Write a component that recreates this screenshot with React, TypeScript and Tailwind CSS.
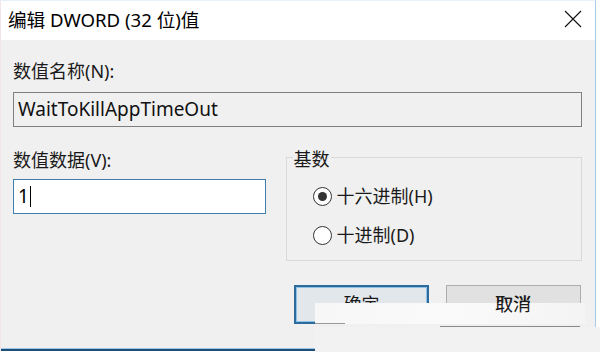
export default function App() {
  return (
    <div className="relative w-[600px] h-[352px] bg-white font-['Noto_Sans','Noto_Sans_CJK_SC',sans-serif] text-black overflow-hidden">
      <div className="w-[596px] h-[351px] flex flex-col border-r border-[#a9cbe8] border-l border-l-[#f1e6e6] border-t border-t-[#e4f3fa]">
        {/* title bar */}
        <div className="h-[39px] bg-white flex items-center justify-between pl-[7px] pr-[13px]">
          <span className="text-[18.6px] leading-[24px] mt-[-1px]">编辑 DWORD (32 位)值</span>
          <svg width="18" height="18" viewBox="0 0 18 18" className="mt-[-3px]">
            <path d="M1 1 L17 17 M17 1 L1 17" stroke="#111" strokeWidth="1.1" fill="none" />
          </svg>
        </div>
        {/* body */}
        <div className="flex-1 bg-[#f0f0f0] pl-[12px] pr-[13px] flex flex-col">
          <div className="mt-[19px] text-[18px] leading-[24px] text-[#1a1a1a]">数值名称(N):</div>
          <div className="mt-[9px] h-[35px] border border-[#7f7f7f] bg-[#f0f0f0] pl-[4px] flex items-center text-[19px] text-[#111]">
            WaitToKillAppTimeOut
          </div>
          <div className="mt-[21px] flex gap-[20px]">
            <div className="w-[253px] flex flex-col">
              <div className="text-[18px] leading-[24px] text-[#1a1a1a]">数值数据(V):</div>
              <div className="mt-[7px] h-[35px] border border-[#3f7fb0] bg-white pl-[4px] flex items-center text-[19px]">
                <span>1</span>
                <span className="ml-[1px] w-[1px] h-[21px] bg-black" />
              </div>
            </div>
            <div className="w-[297px] flex flex-col">
              <div className="relative mt-[9px] h-[104px] border border-[#d9d9d9] flex flex-col pl-[26px] pt-[26px] gap-[15px]">
                <span className="absolute top-[-11px] left-[6px] px-[1px] bg-[#f0f0f0] text-[18px] leading-[24px] text-[#1a1a1a]">基数</span>
                <div className="flex items-center h-[24px]">
                  <span className="w-[19px] h-[19px] rounded-full border border-[#333] bg-white flex items-center justify-center">
                    <span className="w-[9px] h-[9px] rounded-full bg-[#333]" />
                  </span>
                  <span className="ml-[5px] text-[18px] leading-[24px] text-[#1a1a1a]">十六进制(H)</span>
                </div>
                <div className="flex items-center h-[24px]">
                  <span className="w-[19px] h-[19px] rounded-full border border-[#333] bg-white" />
                  <span className="ml-[5px] text-[18px] leading-[24px] text-[#1a1a1a]">十进制(D)</span>
                </div>
              </div>
            </div>
          </div>
          <div className="mt-[24px] flex justify-end gap-[17px] pr-[1px]">
            <div className="w-[135px] h-[39px] border-2 border-[#2c6b9c] bg-[#e2e7ec] flex items-center justify-center text-[18px] text-[#1a1a1a] shadow-[inset_0_0_0_1px_#8cc0e6]">
              确定
            </div>
            <div className="relative z-10 w-[135px] h-[39px] border border-[#adadad] bg-[#e1e1e1] flex items-center justify-center text-[18px] text-[#1a1a1a]">
              <span className="relative z-20">取消</span>
            </div>
          </div>
        </div>
        <div className="h-[1px] bg-[#9cc7ea]" />
        <div className="h-[2px] bg-[#1d4f7a]" />
      </div>
      {/* smudged overlays */}
      <div className="absolute left-[315px] top-[303px] w-[270px] h-[21px] bg-gradient-to-r from-[#f7f7f7] via-[#fafafa] to-[#f4f4f4] z-[15]" />
      <div className="absolute left-[440px] top-[326px] w-[140px] h-[1px] bg-[#8a8a8a] z-[15]" />
      <div className="absolute left-[315px] top-[327px] w-[285px] h-[25px] bg-[#f2f2f2] z-[15]" />
      <div className="absolute left-[315px] top-[323px] w-[30px] h-[1px] bg-[#9a9a9a] z-[15]" />
      <span className="absolute left-[495px] top-[292px] text-[18px] leading-[24px] text-[#1a1a1a] z-20">取消</span>
    </div>
  );
}
